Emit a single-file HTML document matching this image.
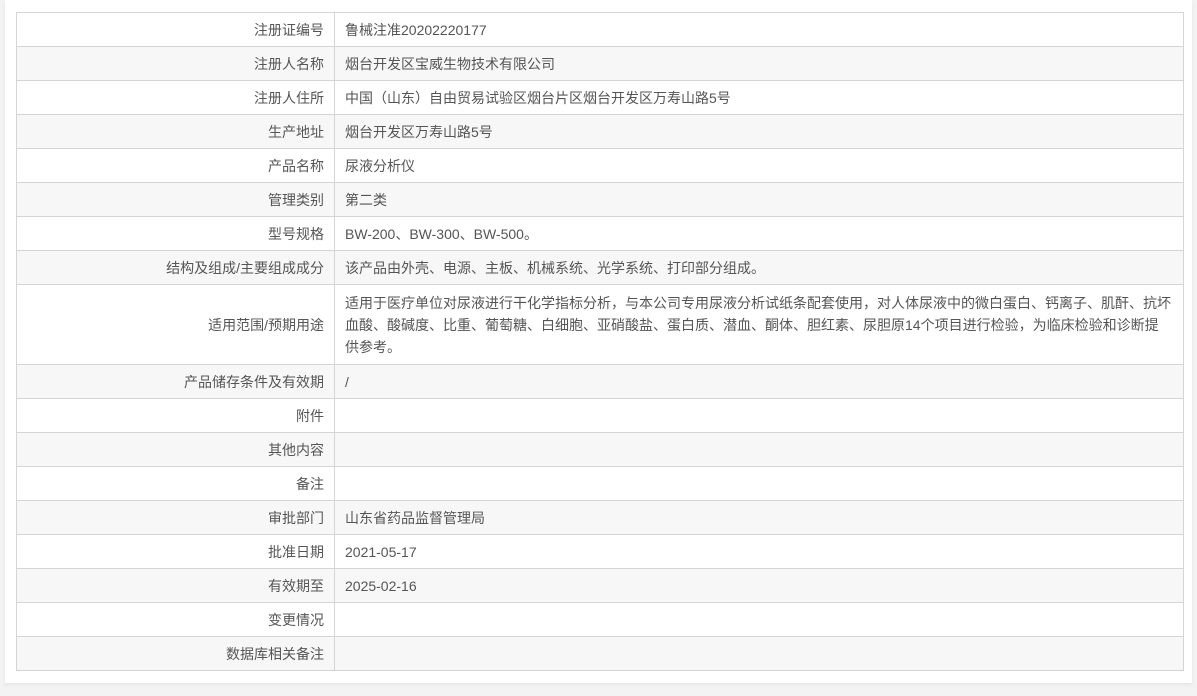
<!DOCTYPE html>
<html><head><meta charset="utf-8"><style>
html,body{margin:0;padding:0;background:#f3f3f3;width:1197px;height:696px;overflow:hidden}
.card{position:absolute;left:5px;top:0;width:1187px;height:683px;background:#fff;box-shadow:0 2px 4px rgba(0,0,0,0.06)}
table{position:absolute;left:16px;top:12px;width:1168px;border-collapse:collapse;font-family:"Liberation Sans","Noto Sans CJK SC",sans-serif;font-size:14px;color:#555;border:1px solid #d2d2d2}
td{border:1px solid #d5d5d5;height:34px;padding:0 10px;line-height:22px;vertical-align:middle;box-sizing:border-box}
td.l{width:318px;text-align:right}
tr:nth-child(even) td{background:#f7f7f7}
tr.tall td{height:80px;padding:6px 10px}
</style></head><body>
<div class="card"></div>
<table>
<tr><td class="l">注册证编号</td><td>鲁械注准20202220177</td></tr>
<tr><td class="l">注册人名称</td><td>烟台开发区宝威生物技术有限公司</td></tr>
<tr><td class="l">注册人住所</td><td>中国（山东）自由贸易试验区烟台片区烟台开发区万寿山路5号</td></tr>
<tr><td class="l">生产地址</td><td>烟台开发区万寿山路5号</td></tr>
<tr><td class="l">产品名称</td><td>尿液分析仪</td></tr>
<tr><td class="l">管理类别</td><td>第二类</td></tr>
<tr><td class="l">型号规格</td><td>BW-200、BW-300、BW-500。</td></tr>
<tr><td class="l">结构及组成/主要组成成分</td><td>该产品由外壳、电源、主板、机械系统、光学系统、打印部分组成。</td></tr>
<tr class="tall"><td class="l">适用范围/预期用途</td><td>适用于医疗单位对尿液进行干化学指标分析，与本公司专用尿液分析试纸条配套使用，对人体尿液中的微白蛋白、钙离子、肌酐、抗坏<br>血酸、酸碱度、比重、葡萄糖、白细胞、亚硝酸盐、蛋白质、潜血、酮体、胆红素、尿胆原14个项目进行检验，为临床检验和诊断提<br>供参考。</td></tr>
<tr><td class="l">产品储存条件及有效期</td><td>/</td></tr>
<tr><td class="l">附件</td><td></td></tr>
<tr><td class="l">其他内容</td><td></td></tr>
<tr><td class="l">备注</td><td></td></tr>
<tr><td class="l">审批部门</td><td>山东省药品监督管理局</td></tr>
<tr><td class="l">批准日期</td><td>2021-05-17</td></tr>
<tr><td class="l">有效期至</td><td>2025-02-16</td></tr>
<tr><td class="l">变更情况</td><td></td></tr>
<tr><td class="l">数据库相关备注</td><td></td></tr>
</table>
</body></html>
